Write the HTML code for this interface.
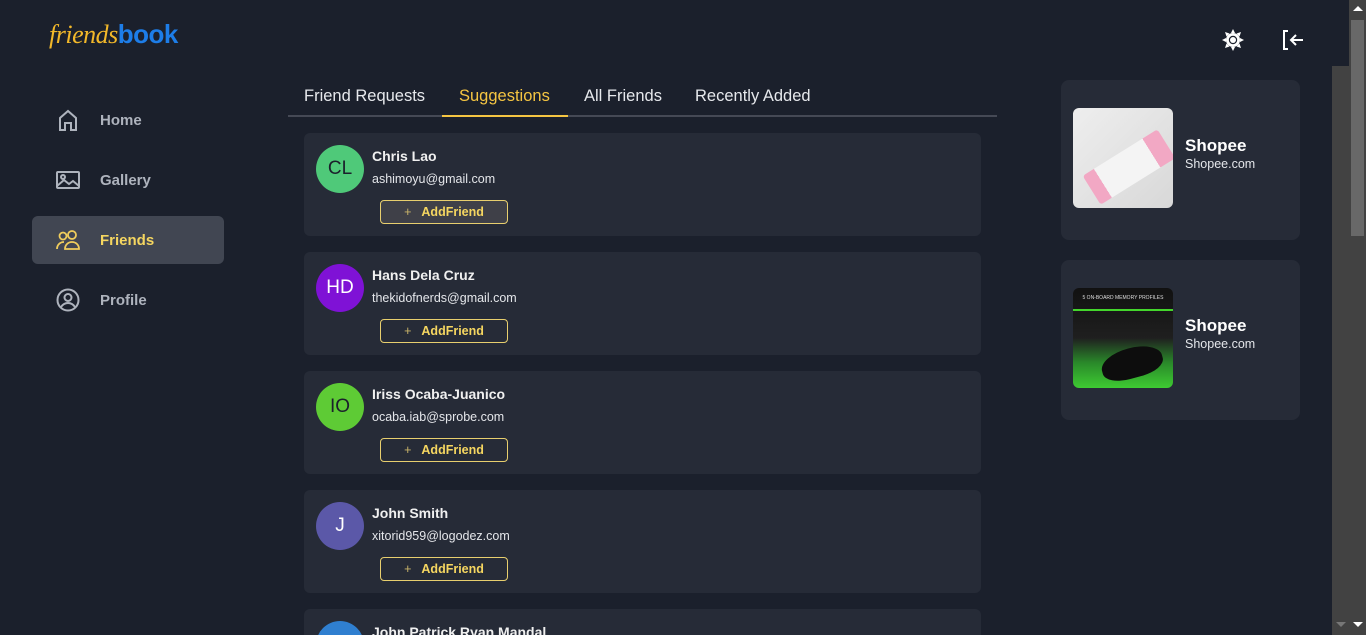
<!DOCTYPE html>
<html style="height:635px;overflow:hidden"><head><meta charset="utf-8"><style>
*{margin:0;padding:0;box-sizing:border-box}
body{width:1366px;height:635px;overflow:hidden;background:#1b202c;font-family:"Liberation Sans",sans-serif;position:relative;color:#fff}
.abs{position:absolute}
.logo{left:49px;top:19px;font-size:26px;letter-spacing:-0.5px}
.nav{left:32px;width:192px;height:48px;border-radius:6px}
.nav svg{position:absolute;left:24px;top:12px}
.nav span{position:absolute;left:68px;top:16px;font-size:15px;font-weight:bold;color:#aeb3bd}
.tab{top:87px;font-size:16.5px;color:#e6e8ec}
.card{left:304px;width:677px;height:103px;background:#262b37;border-radius:6px}
.av{position:absolute;left:12px;top:12px;width:48px;height:48px;border-radius:50%;display:flex;align-items:center;justify-content:center;font-size:19px}
.nm{position:absolute;left:68px;top:15px;font-size:14px;font-weight:bold;color:#f0f0f0}
.em{position:absolute;left:68px;top:39px;font-size:12.5px;color:#e4e6ea}
.btn{position:absolute;left:76px;top:67px;width:128px;height:24px;border:1px solid #e8cf6e;border-radius:4px;color:#f5d660;font-size:12.5px;font-weight:bold;text-align:center;line-height:22px}
.btn i{font-style:normal;color:#c9b46a;margin-right:10px;font-weight:normal}
.ad{left:1061px;width:239px;height:160px;background:#262b37;border-radius:8px}
.ad .img{position:absolute;left:12px;top:28px;width:100px;height:100px;border-radius:6px;overflow:hidden}
.ad b{position:absolute;left:124px;top:56px;font-size:17px}
.ad small{position:absolute;left:124px;top:77px;font-size:12.5px;color:#e4e6ea}
</style></head><body>
<div class="abs logo"><span style="color:#f2b82a;font-family:'Liberation Serif',serif;font-style:italic">friends</span><span style="color:#1d7de8;font-weight:bold">book</span></div>

<div class="abs nav" style="top:96px"><svg width="24" height="24" viewBox="0 0 24 24" fill="none" stroke="#aeb3bd" stroke-width="2"><path d="M4 22V10l8-7 8 7v12h-5v-7H9v7z"/></svg><span>Home</span></div>
<div class="abs nav" style="top:156px"><svg width="24" height="24" viewBox="0 0 24 24" fill="none" stroke="#aeb3bd" stroke-width="2"><rect x="1" y="4" width="22" height="16" rx="1"/><circle cx="7" cy="9" r="2"/><path d="M1 18l7-6 5 4 4-3 6 5"/></svg><span>Gallery</span></div>
<div class="abs nav" style="top:216px;background:#414652"><svg width="24" height="24" viewBox="0 0 24 24" fill="none" stroke="#f0cd5c" stroke-width="1.8"><circle cx="7" cy="8" r="3.5"/><circle cx="16" cy="7" r="4"/><path d="M1 21c0-4 3-7 7-7M9 21c0-4 3-7 7-7s7 3 7 7z"/></svg><span style="color:#f5d660">Friends</span></div>
<div class="abs nav" style="top:276px"><svg width="24" height="24" viewBox="0 0 24 24" fill="none" stroke="#aeb3bd" stroke-width="2"><circle cx="12" cy="12" r="10.5"/><circle cx="12" cy="9.5" r="3.5"/><path d="M5 19c2-3 4-4 7-4s5 1 7 4"/></svg><span>Profile</span></div>

<div class="abs tab" style="left:304px">Friend Requests</div>
<div class="abs tab" style="left:459px;color:#f5c542">Suggestions</div>
<div class="abs tab" style="left:584px">All Friends</div>
<div class="abs tab" style="left:695px">Recently Added</div>
<div class="abs" style="left:288px;top:115px;width:709px;height:2px;background:#454955"></div>
<div class="abs" style="left:442px;top:115px;width:126px;height:2px;background:#f5c542"></div>

<div class="abs card" style="top:133px"><div class="av" style="background:#4fc979;color:#1b202c">CL</div><div class="nm">Chris Lao</div><div class="em">ashimoyu@gmail.com</div><div class="btn" style="background:#3f4048"><i>+</i>AddFriend</div></div>
<div class="abs card" style="top:252px"><div class="av" style="background:#7f12d6">HD</div><div class="nm">Hans Dela Cruz</div><div class="em">thekidofnerds@gmail.com</div><div class="btn"><i>+</i>AddFriend</div></div>
<div class="abs card" style="top:371px"><div class="av" style="background:#5ecb35;color:#1b202c">IO</div><div class="nm">Iriss Ocaba-Juanico</div><div class="em">ocaba.iab@sprobe.com</div><div class="btn"><i>+</i>AddFriend</div></div>
<div class="abs card" style="top:490px"><div class="av" style="background:#5b58a8">J</div><div class="nm">John Smith</div><div class="em">xitorid959@logodez.com</div><div class="btn"><i>+</i>AddFriend</div></div>
<div class="abs card" style="top:609px;height:26px;border-radius:6px 6px 0 0;overflow:hidden"><div class="av" style="background:#2f7fd0"></div><div class="nm">John Patrick Ryan Mandal</div></div>

<svg class="abs" style="left:1222px;top:29px" width="22" height="22" viewBox="0 0 22 22"><g fill="#fff"><circle cx="11" cy="11" r="7"/><path d="M11 0l2 4h-4zM11 22l2-4h-4zM0 11l4 2v-4zM22 11l-4 2v-4zM3 3l4.5 1.5-3 3zM19 19l-4.5-1.5 3-3zM19 3l-1.5 4.5-3-3zM3 19l1.5-4.5 3 3z"/></g><circle cx="11" cy="11" r="4.2" fill="#1b202c"/><circle cx="11" cy="11" r="3" fill="#fff"/></svg>
<svg class="abs" style="left:1283px;top:30px" width="22" height="20" viewBox="0 0 22 20" fill="none" stroke="#fff" stroke-width="2"><path d="M5 1H1v18h4M20 10H8M13 5l-5 5 5 5"/></svg>

<div class="abs ad" style="top:80px"><div class="img" style="background:linear-gradient(135deg,#eee,#d8d8d8)"><div style="position:absolute;left:12px;top:42px;width:88px;height:34px;transform:rotate(-32deg);background:linear-gradient(90deg,#f2a8c4 15%,#f4f4f4 15%,#f4f4f4 80%,#f2a8c4 80%);border-radius:3px"></div></div><b>Shopee</b><small>Shopee.com</small></div>
<div class="abs ad" style="top:260px"><div class="img" style="background:linear-gradient(180deg,#111 0%,#1f1f1f 50%,#2a8a2a 75%,#3ecb32 100%)"><div style="position:absolute;left:0;top:21px;width:100px;height:2px;background:#44d62c"></div><div style="position:absolute;left:0;top:7px;width:100px;text-align:center;font-size:5px;color:#ddd">5 ON-BOARD MEMORY PROFILES</div><div style="position:absolute;left:28px;top:60px;width:62px;height:30px;border-radius:50% 50% 40% 40%;background:#0d0d0d;transform:rotate(-15deg)"></div></div><b>Shopee</b><small>Shopee.com</small></div>

<div class="abs" style="left:1332px;top:66px;width:17px;height:569px;background:#424242"></div>
<div class="abs" style="left:1349px;top:0;width:17px;height:635px;background:#424242"></div>
<div class="abs" style="left:1351px;top:20px;width:13px;height:216px;background:#686868"></div>
<div class="abs" style="left:1353px;top:6px;width:0;height:0;border-left:5px solid transparent;border-right:5px solid transparent;border-bottom:5px solid #fff"></div>
<div class="abs" style="left:1353px;top:622px;width:0;height:0;border-left:5px solid transparent;border-right:5px solid transparent;border-top:5px solid #fff"></div>
<div class="abs" style="left:1336px;top:622px;width:0;height:0;border-left:5px solid transparent;border-right:5px solid transparent;border-top:5px solid #777"></div>
</body></html>
